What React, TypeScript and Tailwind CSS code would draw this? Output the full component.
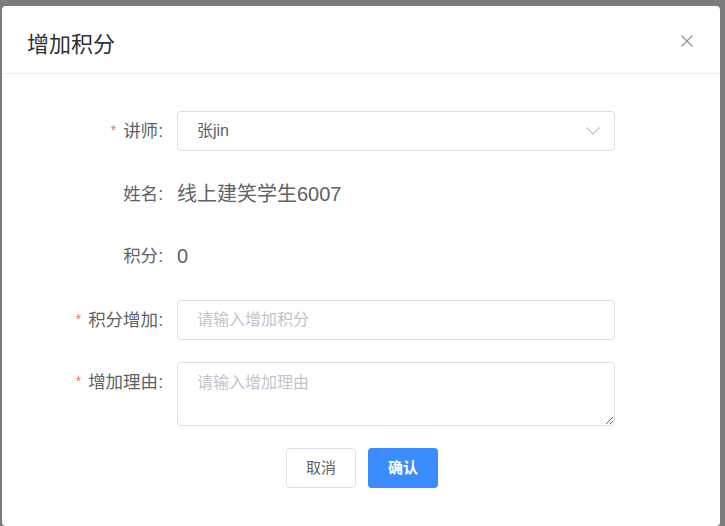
import { ReactNode } from "react";

const FONT = "font-['Liberation_Sans','Noto_Sans_CJK_SC',sans-serif]";

function FormRow({
  label,
  required,
  children,
  className,
}: {
  label: string;
  required?: boolean;
  children: ReactNode;
  className?: string;
}) {
  return (
    <div className={"flex items-start " + (className ?? "")}>
      <label className="flex h-[40px] w-[175px] shrink-0 items-center justify-end pr-[14px] text-[17.5px] text-[#606266]">
        {required && <span className="mr-[7px] -mt-[3px] text-[14px] leading-none text-[#f56c6c]">*</span>}
        <span>{label}:</span>
      </label>
      <div className="w-[438px]">{children}</div>
    </div>
  );
}

export default function App() {
  return (
    <div className={`h-[526px] w-full overflow-hidden bg-[#7c7c7c] pl-[2px] pt-[6px] ${FONT}`}>
      <div className="h-[520px] w-[718px] rounded-[4px] bg-white">
        <div className="relative h-[68px] border-b border-[#ebeef5] pl-[25px] pt-[24px]">
          <h2 className="text-[22px] leading-[30px] text-[#303133]">增加积分</h2>
          <button className="absolute right-[27px] top-[29px] h-[12px] w-[12px]" aria-label="close">
            <svg viewBox="0 0 12 12" className="h-[12px] w-[12px]" fill="none" stroke="#909399" strokeWidth="1.2">
              <path d="M0.5 0.5 L11.5 11.5 M11.5 0.5 L0.5 11.5" />
            </svg>
          </button>
        </div>

        <div className="pt-[37px]">
          <FormRow label="讲师" required className="mb-[23px]">
            <div className="flex h-[40px] items-center justify-between rounded-[4px] border border-[#dcdfe6] pl-[19px] pr-[14px]">
              <span className="text-[16px] text-[#606266]">张jin</span>
              <svg width="14" height="8" viewBox="0 0 14 8" fill="none" stroke="#c0c4cc" strokeWidth="1.2">
                <path d="M0.5 0.5 L7 7 L13.5 0.5" />
              </svg>
            </div>
          </FormRow>

          <FormRow label="姓名" className="mb-[22px]">
            <div className="text-[20px] leading-[40px] text-[#606266]">线上建笑学生6007</div>
          </FormRow>

          <FormRow label="积分" className="mb-[24px]">
            <div className="text-[20px] leading-[40px] text-[#606266]">0</div>
          </FormRow>

          <FormRow label="积分增加" required className="mb-[22px]">
            <input
              placeholder="请输入增加积分"
              className="block h-[40px] w-full rounded-[4px] border border-[#dcdfe6] pl-[19px] text-[16px] text-[#606266] outline-none placeholder:text-[#c0c4cc]"
            />
          </FormRow>

          <FormRow label="增加理由" required className="mb-[22px]">
            <textarea
              placeholder="请输入增加理由"
              className="block h-[64px] w-full rounded-[4px] border border-[#dcdfe6] pl-[19px] pt-[8px] text-[16px] leading-[24px] text-[#606266] outline-none placeholder:text-[#c0c4cc]"
            />
          </FormRow>

          <div className="flex justify-center gap-[12px] pl-[2px]">
            <button className="h-[40px] w-[70px] rounded-[4px] border border-[#dcdfe6] bg-white text-[15px] text-[#606266]">
              取消
            </button>
            <button className="h-[40px] w-[70px] rounded-[4px] bg-[#3a8cff] text-[15px] font-bold text-white">
              确认
            </button>
          </div>
        </div>
      </div>
    </div>
  );
}
